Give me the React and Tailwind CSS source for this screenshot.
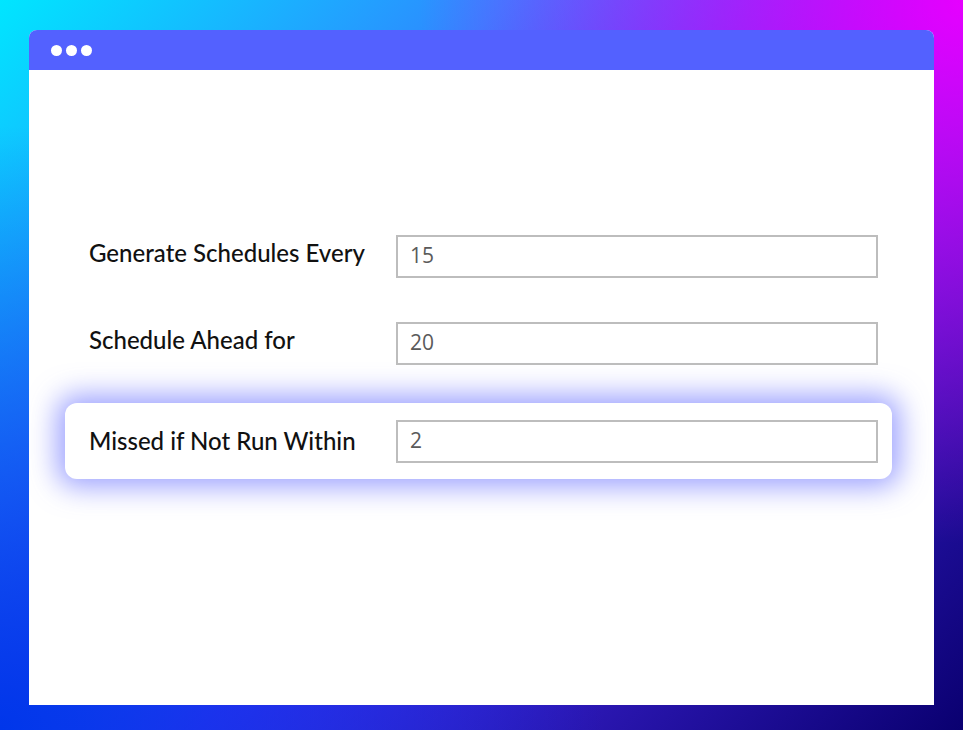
export default function App() {
  const rows = [
    { label: "Generate Schedules Every", value: "15", wrap: "mt-[148px]", lift: "-mt-[6px]" },
    { label: "Schedule Ahead for", value: "20", wrap: "mt-[11px]", lift: "-mt-[6px]" },
  ];

  return (
    <div className="w-[963px] h-[730px] pt-[30px] px-[29px] pb-[25px] bg-[radial-gradient(circle_at_100%_0%,#e600ff_0%,rgba(230,0,255,0)_45%),radial-gradient(circle_at_0%_100%,#0036ea_0%,rgba(0,54,234,0)_50%),linear-gradient(135deg,#00e6ff_0%,#2f86ff_30%,#4a2cf0_55%,#0a0070_100%)]">
      <div className="h-full flex flex-col bg-white rounded-t-[8px] overflow-hidden">
        <div className="h-[40px] shrink-0 bg-[#5361ff] flex items-center gap-[4px] pl-[22px]">
          <span className="w-[11px] h-[11px] rounded-full bg-white" />
          <span className="w-[11px] h-[11px] rounded-full bg-white" />
          <span className="w-[11px] h-[11px] rounded-full bg-white" />
        </div>

        <div className="flex-1 pl-[36px] pr-[42px] font-['Lato',sans-serif]">
          {rows.map((r) => (
            <div key={r.label} className={`${r.wrap} h-[76px] flex items-center pl-[24px] pr-[14px]`}>
              <div className={`w-[307px] text-[24px] font-medium text-[#111] ${r.lift}`}>{r.label}</div>
              <div className="flex-1 h-[43px] border-2 border-[#bdbdbd] flex items-center pl-[12px] text-[21px] text-[#5a5a5a] font-['Open_Sans',sans-serif]">
                {r.value}
              </div>
            </div>
          ))}

          <div className="mt-[22px] h-[76px] flex items-center pl-[24px] pr-[14px] bg-white rounded-[12px] shadow-[0_0_28px_8px_rgba(92,100,255,0.6)]">
            <div className="w-[307px] text-[24px] font-medium text-[#111]">Missed if Not Run Within</div>
            <div className="flex-1 h-[43px] border-2 border-[#bdbdbd] flex items-center pl-[12px] text-[21px] text-[#5a5a5a] font-['Open_Sans',sans-serif]">
              2
            </div>
          </div>
        </div>
      </div>
    </div>
  );
}
